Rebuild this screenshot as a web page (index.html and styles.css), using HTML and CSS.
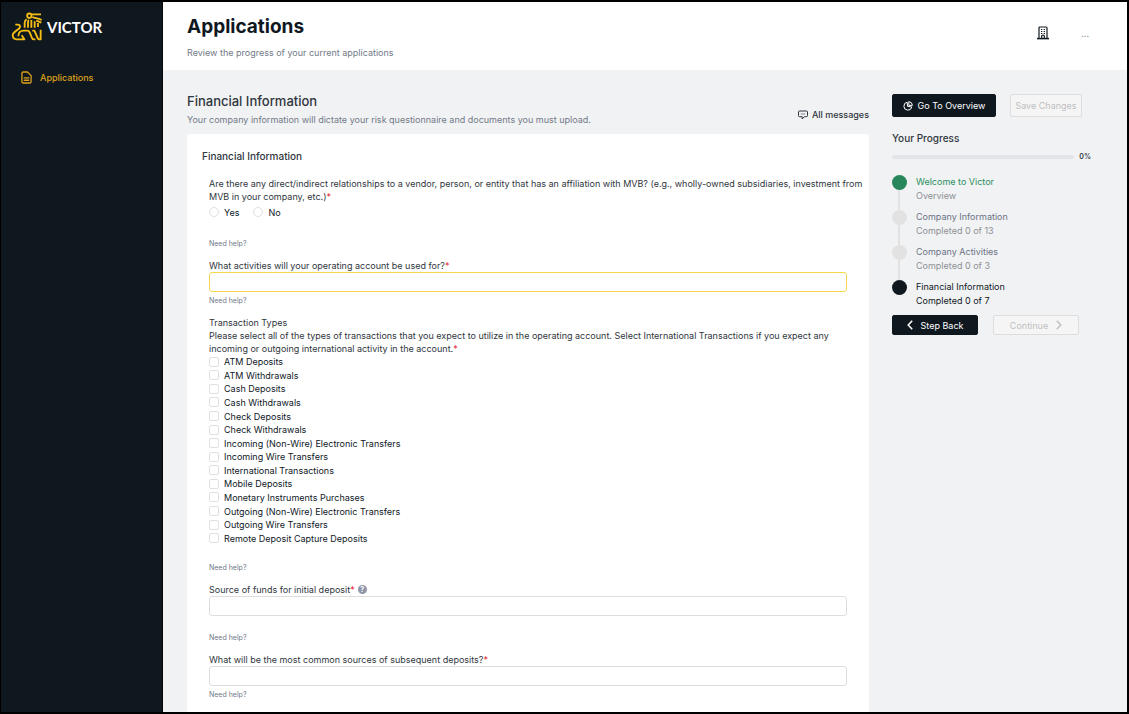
FILE: index.html
```html
<!DOCTYPE html>
<html lang="en">
<head>
<meta charset="utf-8">
<meta name="viewport" content="width=device-width, initial-scale=1">
<title>Applications</title>
<link rel="stylesheet" href="styles.css">
</head>
<body>
<div class="shell">
  <nav class="sidebar" aria-label="Main">
    <a class="brand" href="#">
      <svg class="brand-mark" viewBox="34 35 96 87" fill="none" stroke="#f5bd14" stroke-width="5.500" stroke-linecap="butt" stroke-linejoin="round" aria-hidden="true">
        <circle cx="89" cy="46" r="6.500"/>
        <path d="M95 42h29M98 50c8 4 16 3 28 9M110 61q8 3 15 6"/>
        <path d="M75 82v-14q0-8 6-11M85 82v-16q0-5 3-7M95 82v-23M105 82v-19M115 80v-12"/>
        <path d="M47 73h7q7 0 7 6c0 10-22 13-22 26q0 12 13 12h22l-8-12"/>
        <path d="M56 108q0-17 16-17h11q5 0 7 5l7 17q2 4 5 4h5M98 91h6l10 22q2 4 5 4h4V88"/>
      </svg>
      <span class="brand-name">VICTOR</span>
    </a>
    <a class="nav-link" href="#">
      <svg class="nav-icon" viewBox="0 0 12 14" fill="none" stroke="currentColor" stroke-width="1.400" stroke-linejoin="round" stroke-linecap="round" aria-hidden="true">
        <path d="M2.500 1h4.500l4 4v6.500q0 1.500-1.500 1.500h-7Q1 13 1 11.500v-9Q1 1 2.500 1zM3.500 7.500h5M3.500 10h5"/>
      </svg>
      Applications
    </a>
  </nav>

  <div class="content">
    <header class="topbar">
      <div class="topbar-text">
        <h1>Applications</h1>
        <p class="muted">Review the progress of your current applications</p>
      </div>
      <div class="topbar-tools">
        <button class="icon-button" type="button" aria-label="Company">
          <svg width="12" height="14" viewBox="0 0 12 14" fill="none" stroke="currentColor" aria-hidden="true">
            <path d="M2 12.500V2q0-1 1-1h6q1 0 1 1v10.500" stroke-width="1.200"/>
            <path d="M0 12.600h12" stroke-width="1.500"/>
            <path d="M4.700 12.500V10q0-1 1.300-1t1.300 1v2.500" stroke-width="1.200"/>
            <path d="M4 3.500h1.300M6.700 3.500H8M4 5.500h1.300M6.700 5.500H8M4 7.500h1.300M6.700 7.500H8" stroke-width="1.200"/>
          </svg>
        </button>
        <button class="more-button" type="button" aria-label="More">...</button>
      </div>
    </header>

    <div class="workspace">
      <main class="main">
        <div class="section-head">
          <div>
            <h2>Financial Information</h2>
            <p class="muted">Your company information will dictate your risk questionnaire and documents you must upload.</p>
          </div>
          <button class="messages" type="button">
            <svg width="10" height="10" viewBox="0 0 10 10" fill="none" stroke="currentColor" stroke-linejoin="round" aria-hidden="true">
              <path d="M1.500 1h7q1 0 1 1v3.700q0 1-1 1H6.300L4.200 9V6.700H1.500q-1 0-1-1V2q0-1 1-1z"/>
              <path d="M2.800 4h4.400" stroke-width=".6"/>
            </svg>
            All messages
          </button>
        </div>

        <form class="card">
          <h3>Financial Information</h3>
          <div class="fields">
            <fieldset class="field">
              <legend>Are there any direct/indirect relationships to a vendor, person, or entity that has an affiliation with MVB? (e.g., wholly-owned subsidiaries, investment from MVB in your company, etc.)<span class="req">*</span></legend>
              <div class="radios">
                <label class="choice"><input type="radio" name="mvb">Yes</label>
                <label class="choice"><input type="radio" name="mvb">No</label>
              </div>
              <a class="help spaced" href="#">Need help?</a>
            </fieldset>

            <div class="field">
              <label for="activities">What activities will your operating account be used for?<span class="req">*</span></label>
              <input class="text highlighted" id="activities" type="text">
              <a class="help" href="#">Need help?</a>
            </div>

            <fieldset class="field">
              <legend>Transaction Types<br>Please select all of the types of transactions that you expect to utilize in the operating account. Select International Transactions if you expect any incoming or outgoing international activity in the account.<span class="req">*</span></legend>
              <div class="checks">
                <label class="choice"><input type="checkbox">ATM Deposits</label>
                <label class="choice"><input type="checkbox">ATM Withdrawals</label>
                <label class="choice"><input type="checkbox">Cash Deposits</label>
                <label class="choice"><input type="checkbox">Cash Withdrawals</label>
                <label class="choice"><input type="checkbox">Check Deposits</label>
                <label class="choice"><input type="checkbox">Check Withdrawals</label>
                <label class="choice"><input type="checkbox">Incoming (Non-Wire) Electronic Transfers</label>
                <label class="choice"><input type="checkbox">Incoming Wire Transfers</label>
                <label class="choice"><input type="checkbox">International Transactions</label>
                <label class="choice"><input type="checkbox">Mobile Deposits</label>
                <label class="choice"><input type="checkbox">Monetary Instruments Purchases</label>
                <label class="choice"><input type="checkbox">Outgoing (Non-Wire) Electronic Transfers</label>
                <label class="choice"><input type="checkbox">Outgoing Wire Transfers</label>
                <label class="choice"><input type="checkbox">Remote Deposit Capture Deposits</label>
              </div>
              <a class="help spaced" href="#">Need help?</a>
            </fieldset>

            <div class="field">
              <div class="label-row">
                <label for="initial">Source of funds for initial deposit<span class="req">*</span></label>
                <span class="hint" title="Source of funds">?</span>
              </div>
              <input class="text" id="initial" type="text">
              <a class="help spaced" href="#">Need help?</a>
            </div>

            <div class="field">
              <label for="subsequent">What will be the most common sources of subsequent deposits?<span class="req">*</span></label>
              <input class="text" id="subsequent" type="text">
              <a class="help" href="#">Need help?</a>
            </div>
          </div>
        </form>
      </main>

      <aside class="aside">
        <div class="actions">
          <button class="btn primary" type="button">
            <svg width="10" height="10" viewBox="0 0 10 10" fill="none" stroke="currentColor" stroke-linejoin="round" aria-hidden="true">
              <path d="M4.200 1.200A4 4 0 1 0 8.800 6L4.500 5.300z"/>
              <path d="M5.800.6a4 4 0 0 1 3.600 3.800H5.800z"/>
            </svg>
            Go To Overview
          </button>
          <button class="btn save" type="button" disabled>Save Changes</button>
        </div>

        <h4>Your Progress</h4>
        <div class="progress">
          <div class="track" role="progressbar" aria-valuenow="0" aria-valuemin="0" aria-valuemax="100" aria-label="Your Progress"></div>
          <span>0%</span>
        </div>

        <ol class="steps">
          <li class="step done"><span class="dot"></span><div><strong>Welcome to Victor</strong><span>Overview</span></div></li>
          <li class="step"><span class="dot"></span><div><strong>Company Information</strong><span>Completed 0 of 13</span></div></li>
          <li class="step"><span class="dot"></span><div><strong>Company Activities</strong><span>Completed 0 of 3</span></div></li>
          <li class="step current"><span class="dot"></span><div><strong>Financial Information</strong><span>Completed 0 of 7</span></div></li>
        </ol>

        <div class="pager">
          <button class="btn primary" type="button">
            <svg width="6" height="10" viewBox="0 0 6 10" fill="none" stroke="currentColor" stroke-width="1.500" aria-hidden="true"><path d="M5.200.7 1.200 5l4 4.300"/></svg>
            Step Back
          </button>
          <button class="btn" type="button" disabled>
            Continue
            <svg width="6" height="10" viewBox="0 0 6 10" fill="none" stroke="currentColor" stroke-width="1.500" aria-hidden="true"><path d="m.8.7 4 4.300-4 4.300"/></svg>
          </button>
        </div>
      </aside>
    </div>
  </div>
</div>
</body>
</html>
```
FILE: styles.css
```css
* { box-sizing: border-box; }

body {
  margin: 0;
  font-family: Inter, "Liberation Sans", sans-serif;
  font-size: 9px;
  line-height: 13px;
  color: #30363d;
  background: #000;
}

h1, h2, h3, h4, p { margin: 0; }
a { color: inherit; text-decoration: none; }
button, input { font: inherit; }
button { color: inherit; }
svg { flex: none; }

.shell {
  display: flex;
  height: 100vh;
  border: 2px solid #000;
  border-left-width: 1px;
  overflow: hidden;
  background: #f1f2f4;
}

.sidebar {
  flex: none;
  width: 162px;
  padding: 9px 10px;
  background: #10181f;
  border-right: 1px solid #05080b;
}

.brand { display: flex; align-items: center; gap: 4px; height: 30px; }
.brand-mark { width: 32px; height: 29px; }
.brand-name { padding-top: 2px; font-family: Lato, sans-serif; font-size: 15px; font-weight: 700; color: #fff; }

.nav-link {
  display: flex;
  align-items: center;
  gap: 8px;
  margin-top: 30px;
  padding-left: 10px;
  font-weight: 500;
  color: #dfa11b;
}
.nav-icon { width: 11px; height: 13px; }

.content { flex: 1; min-width: 0; }

.topbar {
  display: flex;
  justify-content: space-between;
  height: 68px;
  padding: 12px 38px 0 24px;
  background: #fff;
}
h1 { font-size: 19px; line-height: 25px; font-weight: 700; color: #10181f; }
.topbar-text .muted { margin-top: 7px; }
.muted { color: #727a87; }
.topbar-tools { display: flex; align-items: center; gap: 32px; height: 38px; }
.icon-button, .more-button, .messages { border: 0; padding: 0; background: none; }
.icon-button { display: flex; color: #10181f; }
.more-button { color: #8c9096; }

.workspace { display: flex; gap: 23px; padding: 22px 36px 0 24px; }
.main { flex: 1; min-width: 0; }

.section-head { display: flex; justify-content: space-between; align-items: flex-end; }
h2 { font-size: 13px; line-height: 18px; font-weight: 500; }
.section-head .muted { margin-top: 3px; }
.messages { display: flex; align-items: center; gap: 4px; padding-bottom: 5px; font-weight: 500; }

.card { margin-top: 8px; padding: 15px 22px 24px 15px; background: #fff; border-radius: 4px; }
h3 { font-size: 10px; line-height: 14px; font-weight: 500; }
.fields { display: flex; flex-direction: column; gap: 9px; margin-top: 14px; padding-left: 7px; }
.field { display: flex; flex-direction: column; min-width: 0; margin: 0; padding: 0; border: 0; }
.field legend { margin-right: -20px; padding: 0; }
.req { color: #e5202b; }

.text {
  width: 100%;
  height: 20px;
  padding: 0 6px;
  border: 1px solid #dedede;
  border-radius: 3px;
  background: #fff;
}
.highlighted { border-color: #f7d64a; }

.help { margin-top: 2px; font-size: 7px; color: #6f7787; }
.help.spaced { margin-top: 16px; }
.text + .help.spaced { margin-top: 15px; }

.choice { display: flex; align-items: center; gap: 5px; color: #10181f; }
.choice input {
  appearance: none;
  width: 10px;
  height: 10px;
  margin: 0;
  border: 1px solid #dfe0e2;
  border-radius: 2px;
  background: #fff;
}
.choice input[type="radio"] { border-radius: 50%; }
.radios { display: flex; gap: 14px; height: 18px; }
.checks { display: grid; height: 190px; }

.label-row { display: flex; align-items: center; gap: 3px; }
.hint {
  width: 9px;
  height: 9px;
  border-radius: 50%;
  background: #8f96a8;
  color: #fff;
  font-size: 7px;
  line-height: 9px;
  font-weight: 700;
  text-align: center;
}

.aside { flex: none; width: 199px; }
.actions { display: flex; gap: 14px; margin-top: 2px; }
.btn {
  display: flex;
  align-items: center;
  justify-content: center;
  gap: 8px;
  width: 86px;
  height: 20px;
  padding: 0;
  border: 1px solid #dcdddf;
  border-radius: 2px;
  background: #f5f5f5;
}
.btn:disabled { color: #bfc0c2; }
.btn.primary { border-color: #10181f; background: #10181f; color: #fff; }
.actions .btn { width: 104px; height: 23px; gap: 5px; }
.actions .save { width: 72px; }

h4 { margin-top: 14px; font-size: 10px; line-height: 14px; font-weight: 500; }
.progress { display: flex; align-items: center; gap: 5px; margin-top: 5px; font-size: 7px; font-weight: 600; }
.track { flex: 1; height: 4px; border-radius: 2px; background: #e3e4e9; }

.steps { margin: 12px 0 0; padding: 0; list-style: none; }
.step { position: relative; display: flex; gap: 9px; height: 35px; color: #8e9095; }
.step:last-child { height: 28px; }
.step strong { display: block; font-weight: 400; line-height: 14px; color: #6b7385; }
.step div > span { display: block; }
.dot { position: relative; flex: none; width: 15px; height: 15px; border-radius: 50%; background: #e2e2e2; }
.step:not(:last-child)::before {
  content: "";
  position: absolute;
  top: 15px;
  left: 6px;
  width: 2px;
  height: 20px;
  background: #e2e2e2;
}
.done .dot { background: #27865a; }
.done strong { color: #2a8f60; }
.current .dot { background: #10181f; }
.current, .current strong { color: #10181f; }

.pager { display: flex; gap: 15px; margin-top: 7px; }
```
